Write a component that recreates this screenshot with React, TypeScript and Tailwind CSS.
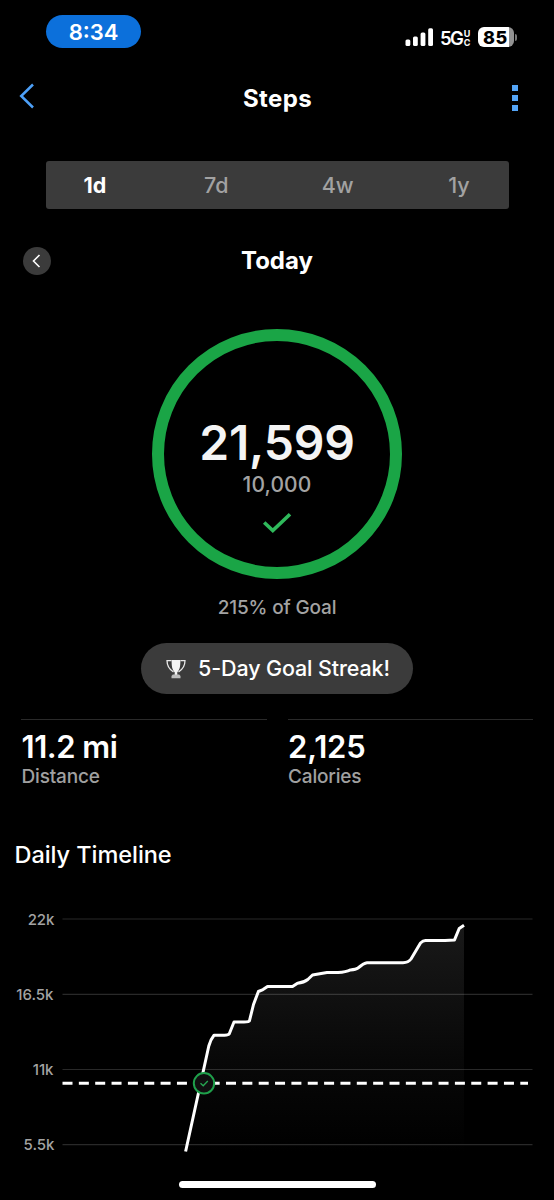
const ranges = ["1d", "7d", "4w", "1y"];

const stats = [
  { value: "11.2 mi", label: "Distance", spacing: "tracking-[-0.5px]" },
  { value: "2,125", label: "Calories", spacing: "tracking-[-0.2px]" },
];

const gridLines = [
  { label: "22k", y: 29, end: 54.5 },
  { label: "16.5k", y: 104.3, end: 53.5 },
  { label: "11k", y: 179.5, end: 53.5 },
  { label: "5.5k", y: 254.7, end: 54.5 },
];

const stepLine =
  "M185.6 261.5 L208.8 156 Q210.5 149.5 214 145.2 H224.5 Q228.5 145.2 229.3 143.8 L234 132 H244 Q249 132 249.4 131 L253.5 114.5 L258.4 101.5 L263 99.6 L267.5 96.5 H292.5 L297.5 93.2 Q304 92.6 307.8 89.5 L312.5 85 L327 82.6 H338 Q346 82 350.5 79.9 Q356 79.5 358 78 Q364 73 367 72.7 H403 Q408.5 72.6 411 69 L420.5 53 Q423 50.6 425.5 50.5 H445 L454.5 49.9 L459.2 38.5 L464 35.3";

function StatusBar() {
  return (
    <div className="flex h-[62px] items-start justify-between pl-[46px] pr-[37px] pt-[15px]">
      <div className="flex h-[33px] w-[95px] items-center justify-center rounded-full bg-[#0c70db] text-[22px] font-semibold leading-none">
        8:34
      </div>
      <div className="mt-3 flex h-5 items-center">
        <svg width="29" height="18" viewBox="0 0 29 18" fill="#fff">
          <rect x="0.5" y="11.5" width="4.8" height="6.5" rx="1.5" />
          <rect x="8" y="8.5" width="4.8" height="9.5" rx="1.5" />
          <rect x="15.6" y="4.5" width="4.8" height="13.5" rx="1.5" />
          <rect x="23.2" y="0.3" width="4.8" height="17.7" rx="1.5" />
        </svg>
        <span className="ml-[6px] mt-px w-[23px] text-[18.5px] font-semibold leading-6 tracking-[-1.7px]">
          5G
        </span>
        <span className="mt-px flex w-2 flex-col items-center text-[9px] font-bold leading-[9px]">
          <span>U</span>
          <span>C</span>
        </span>
        <div className="ml-[7px] flex h-5 w-9 items-center rounded-[6px] bg-[linear-gradient(90deg,#fff_86%,#929292_86%)]">
          <span className="w-[35px] text-center text-[18px] font-extrabold tracking-[0.6px] text-black">
            85
          </span>
        </div>
        <div className="ml-px h-[7px] w-0.5 rounded-r-full bg-[#777]" />
      </div>
    </div>
  );
}

function Header() {
  return (
    <header className="grid h-[72px] grid-cols-3 items-center pl-[19px] pr-[36px]">
      <svg width="16" height="26" viewBox="0 0 16 26" className="-mt-1" fill="none">
        <path d="M14 1.5 L2.2 13 L14 24.5" stroke="#4da0f8" strokeWidth="2.5" />
      </svg>
      <h1 className="pl-[18px] pt-0.5 text-center text-2xl font-bold tracking-[0.4px]">
        Steps
      </h1>
      <div className="flex flex-col items-end gap-1">
        {[0, 1, 2].map((dot) => (
          <span key={dot} className="size-[5.75px] bg-[#54a5f7]" />
        ))}
      </div>
    </header>
  );
}

function GoalRing() {
  return (
    <div className="mx-auto mt-[54px] flex size-[250px] shrink-0 flex-col items-center rounded-full border-[12px] border-[#1aa546]">
      <div className="mt-[73.5px] text-[48px] font-semibold leading-[56px] tracking-[-0.2px] text-[#f4f4f4]">
        21,599
      </div>
      <div className="mt-0.5 text-[21px] font-medium leading-6 tracking-[0.1px] text-[#a3a3a3]">
        10,000
      </div>
      <svg width="30" height="22" viewBox="0 0 30 22" className="mt-[15px]" fill="none">
        <path d="M2.2 10.5 L10.8 18.6 L28 2.2" stroke="#2fb95b" strokeWidth="3.6" />
      </svg>
    </div>
  );
}

function Trophy() {
  return (
    <svg width="20" height="20" viewBox="0 0 20 20" fill="none">
      <path
        d="M5.5 1.6 H1 C1 6.6 3.2 10.5 7.5 13 M14.5 1.6 H19 C19 6.6 16.8 10.5 12.5 13"
        stroke="#e8e8e8"
        strokeWidth="1.3"
      />
      <path
        d="M5.6 1 H14.4 C14.4 7 14 10.8 11.3 13.2 V16 H8.7 V13.2 C6 10.8 5.6 7 5.6 1 Z"
        fill="#f5f5f5"
      />
      <path d="M6.8 15.6 H13.2 L14.5 17 V19.3 H5.5 V17 Z" fill="#bdbdbd" />
    </svg>
  );
}

function Timeline() {
  return (
    <svg width="554" height="282" viewBox="0 0 554 282" fill="none" className="block">
      <defs>
        <linearGradient id="area" x1="0" y1="35" x2="0" y2="262" gradientUnits="userSpaceOnUse">
          <stop offset="0" stopColor="#191919" />
          <stop offset="0.6" stopColor="#080808" />
          <stop offset="1" stopColor="#000" />
        </linearGradient>
      </defs>
      <path d={`${stepLine} V261.5 Z`} fill="url(#area)" />
      {gridLines.map((line) => (
        <g key={line.label}>
          <path d={`M62.5 ${line.y} H532.5`} stroke="#fff" strokeOpacity="0.16" strokeWidth="1.2" />
          <text
            x={line.end}
            y={line.y + 5.6}
            textAnchor="end"
            className="fill-[#a3a3a3] text-[15px] font-medium"
          >
            {line.label}
          </text>
        </g>
      ))}
      <path d="M62.5 193.2 H528" stroke="#fff" strokeWidth="3" strokeDasharray="10 6.35" />
      <path d={stepLine} stroke="#fff" strokeWidth="3" strokeLinejoin="round" />
      <circle cx="204" cy="193.3" r="10.2" fill="#101010" stroke="#1fa04b" strokeWidth="2" />
      <path d="M200.5 193.3 L203.2 195.8 L207.8 191" stroke="#27a852" strokeWidth="1.3" />
    </svg>
  );
}

export default function App() {
  return (
    <div className="flex h-[1200px] w-[554px] flex-col overflow-hidden bg-black font-['Inter',sans-serif] text-white">
      <StatusBar />
      <Header />
      <nav className="mx-auto mt-[27px] flex h-12 w-[463px] shrink-0 items-center justify-between rounded-[3px] bg-[#3b3b3b]">
        {ranges.map((range, i) => (
          <button
            key={range}
            className={
              i === 0
                ? "w-[99px] text-[21.5px] font-bold"
                : "w-[99px] text-[21.5px] font-medium text-[#a2a2a2]"
            }
          >
            {range}
          </button>
        ))}
      </nav>

      <div className="mt-[35px] grid h-[31px] shrink-0 grid-cols-3 items-center px-[23px]">
        <button className="flex size-7 items-center justify-center rounded-full bg-[#3b3b3b]">
          <svg width="10" height="14" viewBox="0 0 10 14" fill="none">
            <path d="M7.5 1 L1.5 7 L7.5 13" stroke="#fff" strokeWidth="1.6" />
          </svg>
        </button>
        <h2 className="pt-px text-center text-2xl font-bold">Today</h2>
      </div>

      <GoalRing />
      <p className="mt-[17px] text-center text-[19px] font-medium leading-6 tracking-[-0.15px] text-[#a3a3a3]">
        215% of Goal
      </p>

      <div className="mx-auto mt-[23px] flex h-[51px] w-[272px] shrink-0 items-center rounded-full bg-[#3b3b3b] pl-[25px]">
        <Trophy />
        <span className="ml-3 whitespace-nowrap text-[21.5px] font-medium tracking-[-0.12px]">
          5-Day Goal Streak!
        </span>
      </div>

      <div className="mt-[25px] grid shrink-0 grid-cols-2 gap-[21px] px-[21px]">
        {stats.map((stat) => (
          <div key={stat.label} className="border-t border-[#2a2a2a] pl-[0.6px] pt-2">
            <div className={`text-[31px] font-semibold leading-[38px] ${stat.spacing}`}>
              {stat.value}
            </div>
            <div className="mt-px text-[19px] font-medium leading-5 tracking-[-0.2px] text-[#a0a0a0]">
              {stat.label}
            </div>
          </div>
        ))}
      </div>

      <h2 className="mt-[52px] h-8 shrink-0 pl-[14.5px] text-[23.5px] font-medium leading-8 tracking-[-0.05px]">
        Daily Timeline
      </h2>
      <div className="mt-[19px] shrink-0">
        <Timeline />
      </div>
      <div className="mx-auto mt-[9px] h-[7px] w-[197px] shrink-0 rounded-full bg-white" />
    </div>
  );
}
